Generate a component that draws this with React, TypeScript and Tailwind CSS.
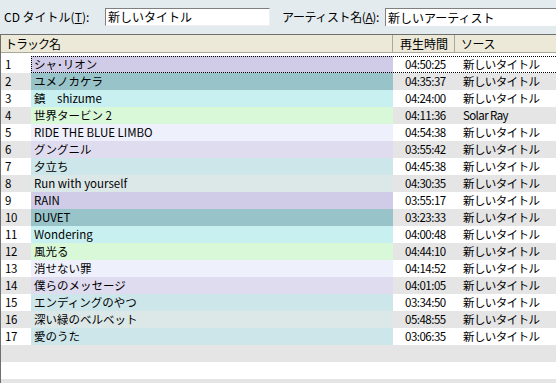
import React from "react";

const rows: [string, string, string, string, string][] = [
  ["1", "シャ･リオン", "04:50:25", "新しいタイトル", "bg-[#d0cce8]"],
  ["2", "ユメノカケラ", "04:35:37", "新しいタイトル", "bg-[#98c3c9]"],
  ["3", "鎮　shizume", "04:24:00", "新しいタイトル", "bg-[#c8f0f0]"],
  ["4", "世界タービン 2", "04:11:36", "Solar Ray", "bg-[#d8f8d8]"],
  ["5", "RIDE THE BLUE LIMBO", "04:54:38", "新しいタイトル", "bg-[#eef0fc]"],
  ["6", "グングニル", "03:55:42", "新しいタイトル", "bg-[#e0dcf0]"],
  ["7", "夕立ち", "04:45:38", "新しいタイトル", "bg-[#cce6ea]"],
  ["8", "Run with yourself", "04:30:35", "新しいタイトル", "bg-[#dce8e8]"],
  ["9", "RAIN", "03:55:17", "新しいタイトル", "bg-[#d0cce8]"],
  ["10", "DUVET", "03:23:33", "新しいタイトル", "bg-[#98c3c9]"],
  ["11", "Wondering", "04:00:48", "新しいタイトル", "bg-[#c8f0f0]"],
  ["12", "風光る", "04:44:10", "新しいタイトル", "bg-[#d8f8d8]"],
  ["13", "消せない罪", "04:14:52", "新しいタイトル", "bg-[#eef0fc]"],
  ["14", "僕らのメッセージ", "04:01:05", "新しいタイトル", "bg-[#e0dcf0]"],
  ["15", "エンディングのやつ", "03:34:50", "新しいタイトル", "bg-[#cce6ea]"],
  ["16", "深い緑のベルベット", "05:48:55", "新しいタイトル", "bg-[#dce8e8]"],
  ["17", "愛のうた", "03:06:35", "新しいタイトル", "bg-[#cce6ea]"],
];

export default function App() {
  return (
    <div
      className="w-[556px] h-[383px] overflow-hidden bg-white text-[12px] text-black"
      style={{ fontFamily: '"Noto Sans CJK JP", "Liberation Sans", sans-serif' }}
    >
      <div className="h-[34px] bg-[#e3ebef] flex items-center">
        <span className="ml-[4px] w-[101px]">
          CD タイトル(<span className="underline">T</span>):
        </span>
        <div className="w-[165px] h-[18px] bg-white border-t border-l border-[#7f7f7f] border-r border-b border-r-[#f0f0f0] border-b-[#f0f0f0] flex items-center pl-[2px] leading-none">
          新しいタイトル
        </div>
        <span className="ml-[12px] w-[103px] tracking-[-0.4px]">
          アーティスト名(<span className="underline">A</span>):
        </span>
        <div className="flex-1 h-[18px] bg-white border-t border-l border-[#7f7f7f] flex items-center pl-[2px] leading-none">
          新しいアーティスト
        </div>
      </div>
      <div className="border-t border-l border-[#6f6f6f] h-[349px] flex flex-col overflow-hidden">
        <div className="h-[18px] bg-[#ece9d8] border-b border-[#aca899] flex leading-none">
          <div className="w-[392px] flex items-center pl-[4px] border-r border-[#aca899] tracking-[-1px]">トラック名</div>
          <div className="w-[62px] flex items-center pl-[7px] border-r border-[#aca899]">再生時間</div>
          <div className="flex-1 flex items-center pl-[6px] tracking-[-0.5px]">ソース</div>
        </div>
        <div className="h-[3px]" />
        {rows.map(([n, t, time, src, c], i) => {
          const alt = i % 2 === 1 ? "bg-[#e5e5e5]" : "bg-white";
          return (
            <div key={n} className="h-[17px] flex leading-none relative text-[11.5px] tracking-[-0.3px]">
              <div className={`w-[30px] ${alt} flex items-center pl-[4px]`}>{n}</div>
              <div className={`w-[362px] ${c} flex items-center pl-[3px] whitespace-pre tracking-[0px]`}>{t}</div>
              <div className={`w-[63px] ${alt} flex items-center pl-[12px] tracking-[-0.5px]`}>{time}</div>
              <div className={`flex-1 ${alt} flex items-center pl-[7px] tracking-[-0.6px]`}>{src}</div>
              {i === 0 && (
                <div className="absolute left-[30px] right-[-2px] top-0 bottom-0 border border-dotted border-black" />
              )}
            </div>
          );
        })}
        <div className="h-[17px] bg-[#e5e5e5]" />
        <div className="h-[17px] bg-white" />
        <div className="flex-1 bg-[#e5e5e5]" />
      </div>
    </div>
  );
}
